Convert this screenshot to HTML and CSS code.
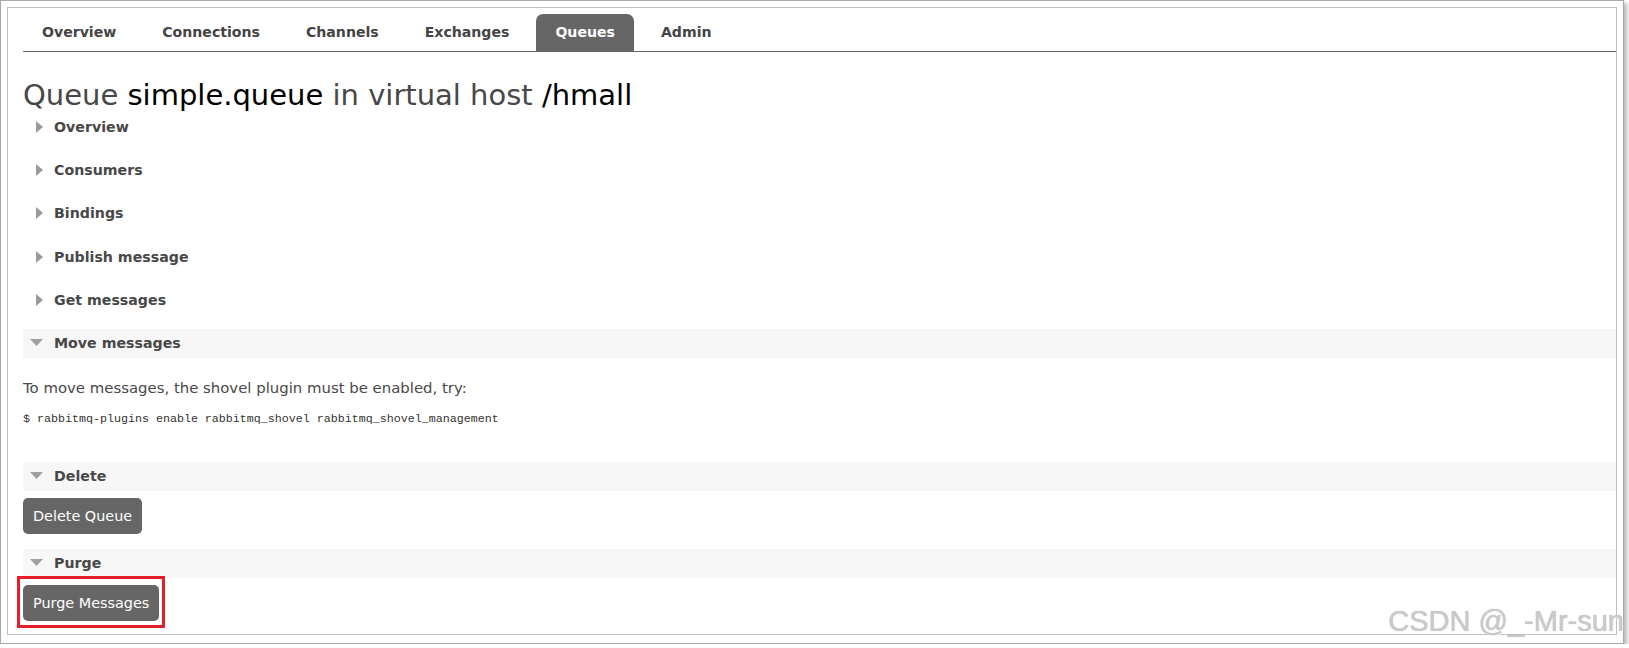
FILE: index.html
```html
<!DOCTYPE html>
<html>
<head>
<meta charset="utf-8">
<link rel="stylesheet" href="styles.css">
</head>
<body>
<div class="shot">
  <div class="frame">
    <ul class="tabs">
      <li><a>Overview</a></li>
      <li><a>Connections</a></li>
      <li><a>Channels</a></li>
      <li><a>Exchanges</a></li>
      <li class="active"><a>Queues</a></li>
      <li><a>Admin</a></li>
    </ul>
    <h1>Queue <b>simple.queue</b> in virtual host <b>/hmall</b></h1>

    <div class="section">
      <div class="hd"><svg class="tri" width="31" height="12" viewBox="0 0 31 12"><polygon points="13,0 20,6 13,12" fill="#9a9a9a"/></svg><span>Overview</span></div>
    </div>
    <div class="section">
      <div class="hd"><svg class="tri" width="31" height="12" viewBox="0 0 31 12"><polygon points="13,0 20,6 13,12" fill="#9a9a9a"/></svg><span>Consumers</span></div>
    </div>
    <div class="section">
      <div class="hd"><svg class="tri" width="31" height="12" viewBox="0 0 31 12"><polygon points="13,0 20,6 13,12" fill="#9a9a9a"/></svg><span>Bindings</span></div>
    </div>
    <div class="section">
      <div class="hd"><svg class="tri" width="31" height="12" viewBox="0 0 31 12"><polygon points="13,0 20,6 13,12" fill="#9a9a9a"/></svg><span>Publish message</span></div>
    </div>
    <div class="section">
      <div class="hd"><svg class="tri" width="31" height="12" viewBox="0 0 31 12"><polygon points="13,0 20,6 13,12" fill="#9a9a9a"/></svg><span>Get messages</span></div>
    </div>

    <div class="section open move">
      <div class="hd bar"><svg class="tri" width="31" height="8" viewBox="0 0 31 8"><polygon points="7,0 20,0 13.5,7" fill="#a0a0a0"/></svg><span>Move messages</span></div>
      <p class="msg">To move messages, the shovel plugin must be enabled, try:</p>
      <pre class="cmd">$ rabbitmq-plugins enable rabbitmq_shovel rabbitmq_shovel_management</pre>
    </div>

    <div class="section open del">
      <div class="hd bar"><svg class="tri" width="31" height="8" viewBox="0 0 31 8"><polygon points="7,0 20,0 13.5,7" fill="#a0a0a0"/></svg><span>Delete</span></div>
      <div class="actions"><button class="btn">Delete Queue</button></div>
    </div>

    <div class="section open purge">
      <div class="hd bar"><svg class="tri" width="31" height="8" viewBox="0 0 31 8"><polygon points="7,0 20,0 13.5,7" fill="#a0a0a0"/></svg><span>Purge</span></div>
      <div class="actions"><span class="marked"><button class="btn">Purge Messages</button></span></div>
    </div>
  </div>
  <div class="watermark">CSDN @_-Mr-sun</div>
</div>
</body>
</html>
```

FILE: styles.css
```css
* { box-sizing: border-box; }
body {
  margin: 0;
  background: #fff;
  font-family: "DejaVu Sans", Verdana, sans-serif;
}
.shot {
  position: relative;
  width: 1624px;
  height: 644px;
  border: 1px solid #a8a8a8;
  padding: 6px 6px 8px 6px;
  background: #fff;
  box-shadow: 3px 3px 4px rgba(0, 0, 0, 0.28);
}
.frame {
  height: 628px;
  border: 1px solid #c0c0c0;
  padding: 6px 0 0 15px;
}
.tabs {
  display: flex;
  gap: 8px;
  margin: 0;
  padding: 0;
  list-style: none;
  border-bottom: 1px solid #666;
}
.tabs a {
  display: block;
  padding: 10px 19px;
  line-height: 17px;
  font-size: 14.1px;
  font-weight: bold;
  color: #444;
  border-radius: 7px 7px 0 0;
}
.tabs .active a {
  background: #666;
  color: #fff;
}
h1 {
  margin: 26px 0 0 0;
  font-size: 29px;
  line-height: 34px;
  font-weight: normal;
  color: #484848;
}
h1 b {
  font-weight: normal;
  color: #000;
}
.section {
  margin-bottom: 14.4px;
}
.hd {
  display: flex;
  align-items: center;
  height: 29px;
  font-size: 14.2px;
  font-weight: bold;
  color: #484848;
}
.tri { flex: none; display: block; }
.bar { background: #f7f7f7; }
.msg {
  margin: 22px 0 0 0;
  font-size: 14.9px;
  line-height: 17px;
  color: #484848;
}
.cmd {
  margin: 15px 0 0 0;
  font-family: "Liberation Mono", monospace;
  font-size: 11.67px;
  line-height: 14px;
  color: #333;
}
.move { margin-bottom: 36px; }
.del { margin-bottom: 15px; }
.actions { padding-top: 7px; }
.btn {
  display: block;
  height: 36px;
  padding: 0 10px;
  border: 0;
  border-radius: 5px;
  background: #666;
  color: #fff;
  font-family: "DejaVu Sans", Verdana, sans-serif;
  font-size: 14.4px;
}
.marked {
  position: relative;
  display: inline-block;
}
.marked::after {
  content: "";
  position: absolute;
  left: -6px;
  right: -6px;
  top: -9px;
  bottom: -7px;
  border: 3px solid #e61e2a;
}
.watermark {
  position: absolute;
  right: -1px;
  bottom: 7px;
  font-family: "Liberation Sans", Arial, sans-serif;
  font-size: 29px;
  line-height: 29px;
  color: #cacaca;
  text-shadow: 0 0 1px rgba(0, 0, 0, 0.3), 1px 1px 1px rgba(255, 255, 255, 0.8);
  white-space: nowrap;
}
```
